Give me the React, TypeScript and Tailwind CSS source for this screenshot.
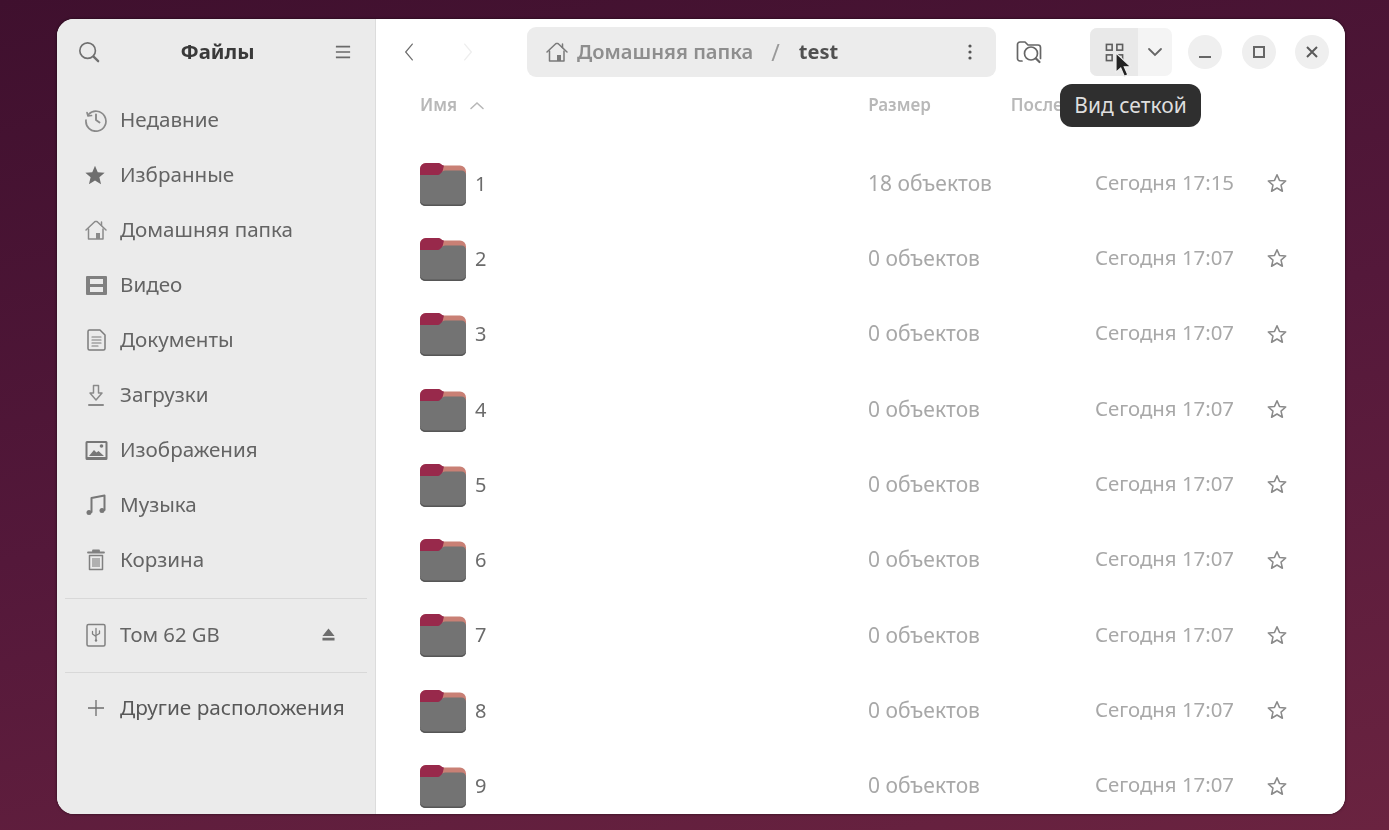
import React from "react";

const S = { fill: "none", stroke: "currentColor", strokeWidth: 1.5, strokeLinecap: "round", strokeLinejoin: "round" } as const;

const HomeIcon = ({ className }: { className?: string }) => (
  <svg viewBox="0 0 24 24" className={className} {...S}>
    <path d="M2 12 11 3.500 13 3.500 22 12" />
    <path d="M4.500 11v10h14.500V11" />
    <path d="M17.500 4v3.500" />
    <rect x="12" y="15" width="4" height="6" fill="currentColor" stroke="none" />
  </svg>
);

const icons: Record<string, React.ReactNode> = {
  recent: (
    <svg viewBox="0 0 24 24" className="h-[24px] w-[24px] text-[#8a8a8a]" {...S} strokeWidth={1.7}>
      <path d="M4.500 6.500A10 10 0 1 1 2 12" />
      <path d="M3 4.500 4 8l3.500-.5" />
      <path d="M12 6.500V12l3.500 2.500" strokeWidth={1.900} />
    </svg>
  ),
  star: (
    <svg viewBox="0 0 24 24" className="h-[22px] w-[22px]" fill="currentColor">
      <path d="M12 2l3 7 7.500.6-5.700 4.900 1.800 7.500L12 18l-6.600 4 1.800-7.500L1.500 9.600 9 9z" />
    </svg>
  ),
  home: <HomeIcon className="h-[24px] w-[24px] text-[#8a8a8a]" />,
  video: (
    <svg viewBox="0 0 24 24" className="h-[24px] w-[24px] text-[#808080]">
      <path fill="currentColor" fillRule="evenodd" d="M3 3h19a1 1 0 0 1 1 1v17a1 1 0 0 1-1 1H3a1 1 0 0 1-1-1V4a1 1 0 0 1 1-1zm3 3v5h13V6zm0 8v5h13v-5z" />
    </svg>
  ),
  docs: (
    <svg viewBox="0 0 24 24" className="h-[24px] w-[24px] text-[#7c7c7c]" {...S}>
      <path d="M4 3.500A1.500 1.500 0 0 1 5.500 2H16l5 5v13.500a1.500 1.500 0 0 1-1.500 1.500h-14A1.500 1.500 0 0 1 4 20.500z" />
      <path d="M8 9h9M8 12h9M8 15h9M8 18h6" strokeWidth={1.2} />
    </svg>
  ),
  down: (
    <svg viewBox="0 0 24 24" className="h-[24px] w-[24px] text-[#8a8a8a]" {...S}>
      <path d="M9.500 2.500h5V10H18l-6 7-6-7h3.500z" />
      <path d="M5 22h14" strokeWidth={2} />
    </svg>
  ),
  image: (
    <svg viewBox="0 0 24 24" className="h-[24px] w-[24px] text-[#777]">
      <path fill="currentColor" fillRule="evenodd" d="M3 3h19a1.500 1.500 0 0 1 1.500 1.500v16A1.500 1.500 0 0 1 22 22H3a1.500 1.500 0 0 1-1.500-1.500v-16A1.500 1.500 0 0 1 3 3zm.5 2v14h18V5z" />
      <path fill="currentColor" d="M5 18l5-6 2.500 2.500 2-1.500L20 18z" />
      <circle cx="17.500" cy="8" r="1.800" fill="currentColor" />
    </svg>
  ),
  music: (
    <svg viewBox="0 0 24 24" className="h-[24px] w-[24px] text-[#777]" {...S} strokeWidth={2}>
      <path d="M7.500 19V5l13-2.500V17" />
      <circle cx="5" cy="19.500" r="2.500" fill="currentColor" stroke="none" />
      <circle cx="18" cy="17.500" r="2.500" fill="currentColor" stroke="none" />
    </svg>
  ),
  trash: (
    <svg viewBox="0 0 24 24" className="h-[24px] w-[24px] text-[#808080]" {...S}>
      <path d="M5.500 7.500h13v14h-13z" />
      <path d="M4 4.500h16M9 4.500V2.500h6v2" strokeWidth={1.800} />
      <rect x="8" y="10" width="8" height="9" fill="currentColor" stroke="none" opacity="0.55" />
    </svg>
  ),
  usb: (
    <svg viewBox="0 0 24 24" className="h-[24px] w-[24px] text-[#808080]" {...S}>
      <rect x="3" y="1.500" width="18" height="21.500" rx="1.500" />
      <path d="M12 5.500v11.500M8.500 8.500v2.500L12 13.500M15.500 8v2.500L12 12.500" strokeWidth={1.300} />
      <circle cx="12" cy="17.500" r="1.200" fill="currentColor" stroke="none" />
    </svg>
  ),
};

const sidebarItems = [
  ["recent", "Недавние"],
  ["star", "Избранные"],
  ["home", "Домашняя папка"],
  ["video", "Видео"],
  ["docs", "Документы"],
  ["down", "Загрузки"],
  ["image", "Изображения"],
  ["music", "Музыка"],
  ["trash", "Корзина"],
];

const rows = ["1", "2", "3", "4", "5", "6", "7", "8", "9"];

const Folder = () => (
  <svg viewBox="0 0 48 46" className="h-[46px] w-[48px] shrink-0">
    <path d="M1 8a6 6 0 0 1 6-6h12c3 0 3.500 2.500 6 2.500h16a6 6 0 0 1 6 6V20H1z" fill="#c98075" />
    <path d="M1 8a6 6 0 0 1 6-6h12c3 0 3.500 2.500 6 2.500l-1 4-2 8H1z" fill="#98294b" />
    <path d="M1 14h18c3 0 3.500-4.500 7-4.500h16.500a4.500 4.500 0 0 1 4.500 4.500V40a5 5 0 0 1-5 5H6a5 5 0 0 1-5-5z" fill="#737373" />
    <path d="M1 38.500a5 5 0 0 0 5 5h36a5 5 0 0 0 5-5V40a5 5 0 0 1-5 5H6a5 5 0 0 1-5-5z" fill="#565656" />
  </svg>
);

const Row = ({ name, size, time }: { name: string; size: string; time: string }) => (
  <div className="flex h-[75.3px] shrink-0 items-center pl-[43px]">
    <div className="flex w-[449px] shrink-0 items-center">
      <Folder />
      <span className="ml-[8px] text-[20px] text-[#6b6b6b]">{name}</span>
    </div>
    <span className="w-[227px] shrink-0 text-[21px] text-[#a8a8a8]">{size}</span>
    <span className="-mt-[3px] w-[171px] shrink-0 text-[20.400px] text-[#a8a8a8]">{time}</span>
    <svg viewBox="0 0 24 24" className="-mt-[1px] h-[22px] w-[22px] shrink-0 text-[#8a8a8a]" fill="none" stroke="currentColor" strokeWidth="1.700" strokeLinejoin="round">
      <path d="M12 3l2.700 6.200 6.800.6-5.100 4.500 1.500 6.700-5.900-3.500-5.900 3.500 1.500-6.700L2.500 9.800l6.800-.6z" />
    </svg>
  </div>
);

export default function App() {
  return (
    <div
      className="relative h-[830px] w-[1389px] overflow-hidden bg-[linear-gradient(168deg,#3f102e,#54183a_50%,#6a2340)] pb-[16px] pl-[57px] pr-[44px] pt-[19px]"
      style={{ fontFamily: '"Noto Sans", "Open Sans", sans-serif' }}
    >
      <div className="relative flex h-[795px] w-[1288px] overflow-hidden rounded-[17px] bg-white blur-[0.7px] shadow-[0_0_3px_rgba(0,0,0,0.6)]">
        {/* Sidebar */}
        <aside className="flex w-[319px] shrink-0 flex-col border-r border-[#dcdcdc] bg-[#ebebeb]">
          <header className="flex h-[66px] shrink-0 items-center justify-between pl-[21px] pr-[24px]">
            <svg viewBox="0 0 24 24" className="h-[22px] w-[22px] text-[#707070]" {...S} strokeWidth={1.800}>
              <circle cx="10.500" cy="10.500" r="8.500" />
              <path d="M17 17l5 5" strokeWidth={2.500} />
            </svg>
            <span className="-mt-[1px] text-[20.300px] font-bold text-[#3a3a3a]">Файлы</span>
            <svg viewBox="0 0 18 16" className="h-[16px] w-[16px] text-[#6a6a6a]" stroke="currentColor" strokeWidth="1.900">
              <path d="M1 2h16M1 8h16M1 14h16" />
            </svg>
          </header>
          <nav className="flex flex-col pt-[7px]">
            {sidebarItems.map(([icon, label]) => (
              <div key={label} className="flex h-[55px] shrink-0 items-center pl-[27px] text-[#6e6e6e]">
                <span className="flex w-[36px] shrink-0 items-center">{icons[icon]}</span>
                <span className="text-[20.600px] text-[#646464]">{label}</span>
              </div>
            ))}
          </nav>
          <div className="mx-[8px] mt-[11px] h-px shrink-0 bg-[#d8d8d8]" />
          <div className="mt-[8px] flex h-[55px] shrink-0 items-center pl-[27px] pr-[40px] text-[#6e6e6e]">
            <span className="flex w-[36px] shrink-0 items-center">{icons.usb}</span>
            <span className="flex-1 text-[20.300px] text-[#646464]">Том 62 GB</span>
            <svg viewBox="0 0 14 13" className="h-[13px] w-[13px]" fill="currentColor">
              <path d="M7 0l6.500 8H.5zM.5 10h13v3H.5z" />
            </svg>
          </div>
          <div className="mx-[8px] mt-[10px] h-px shrink-0 bg-[#d8d8d8]" />
          <div className="mt-[7px] flex h-[55px] shrink-0 items-center pl-[30px] text-[#6e6e6e]">
            <svg viewBox="0 0 18 18" className="h-[18px] w-[18px] shrink-0" stroke="currentColor" strokeWidth="1.300">
              <path d="M9 1v16M1 9h16" />
            </svg>
            <span className="ml-[15px] whitespace-nowrap text-[20.800px] text-[#585858]">Другие расположения</span>
          </div>
        </aside>

        {/* Main */}
        <main className="flex min-w-0 flex-1 flex-col overflow-hidden bg-white">
          <div className="flex h-[66px] shrink-0 items-center">
            <svg viewBox="0 0 12 22" className="ml-[28px] h-[22px] w-[10px] text-[#6e6e6e]" fill="none" stroke="currentColor" strokeWidth="1.500" strokeLinecap="round">
              <path d="M10 1.500 2 11l8 9.500" />
            </svg>
            <svg viewBox="0 0 12 22" className="ml-[49px] h-[22px] w-[10px] text-[#eeeeee]" fill="none" stroke="currentColor" strokeWidth="1.600" strokeLinecap="round">
              <path d="M2 1.500 10 11l-8 9.500" />
            </svg>
            <div className="ml-[54px] flex h-[50px] w-[469px] shrink-0 items-center rounded-[9px] bg-[#ececec] pl-[18px] pr-[24px]">
              <HomeIcon className="h-[24px] w-[24px] text-[#7a7a7a]" />
              <span className="ml-[8px] text-[20.100px] font-semibold text-[#8e8e8e]">Домашняя папка</span>
              <span className="ml-[18px] text-[23px] text-[#9a9a9a]">/</span>
              <span className="ml-[19px] text-[20px] font-bold text-[#505050]">test</span>
              <svg viewBox="0 0 4 16" className="ml-auto h-[16px] w-[4px] text-[#555]" fill="currentColor">
                <circle cx="2" cy="2" r="1.600" />
                <circle cx="2" cy="8" r="1.600" />
                <circle cx="2" cy="14" r="1.600" />
              </svg>
            </div>
            <svg viewBox="0 0 26 24" className="ml-[20px] h-[24px] w-[26px] text-[#666]" fill="none" stroke="currentColor" strokeWidth="1.700" strokeLinecap="round" strokeLinejoin="round">
              <path d="M6 21H4a2.500 2.500 0 0 1-2.500-2.500V4.500A2.500 2.500 0 0 1 4 2h5l3 3h10a2.500 2.500 0 0 1 2.500 2.500v11" />
              <circle cx="15" cy="13.500" r="6.500" />
              <path d="M20 18.500l3.500 3.500" strokeWidth={2.200} />
            </svg>
            <div className="ml-[48px] flex h-[48px] w-[82px] shrink-0 overflow-hidden rounded-[7px] bg-[#f4f4f4]">
              <div className="flex w-[48px] items-center justify-center bg-[#e9e9e9]">
                <svg viewBox="0 0 20 20" className="h-[19px] w-[19px] text-[#5e5e5e]" fill="none" stroke="currentColor" strokeWidth="1.700">
                  <rect x="1.500" y="1.500" width="6" height="6" />
                  <rect x="12.500" y="1.500" width="6" height="6" />
                  <rect x="1.500" y="12.500" width="6" height="6" />
                  <rect x="12.500" y="12.500" width="6" height="6" />
                </svg>
              </div>
              <div className="flex flex-1 items-center justify-center">
                <svg viewBox="0 0 16 10" className="h-[10px] w-[16px] text-[#666]" fill="none" stroke="currentColor" strokeWidth="1.800" strokeLinecap="round">
                  <path d="M2 2l6 6 6-6" />
                </svg>
              </div>
            </div>
            <div className="ml-[16px] flex items-center gap-[19.500px]">
              <div className="flex h-[34px] w-[34px] items-center justify-center rounded-full bg-[#efefef]">
                <svg viewBox="0 0 12 2" className="mt-[9px] h-[2px] w-[12px] text-[#666]" stroke="currentColor" strokeWidth="2">
                  <path d="M0 1h12" />
                </svg>
              </div>
              <div className="flex h-[34px] w-[34px] items-center justify-center rounded-full bg-[#efefef]">
                <svg viewBox="0 0 12 12" className="h-[12px] w-[12px] text-[#666]" fill="none" stroke="currentColor" strokeWidth="2">
                  <rect x="1" y="1" width="10" height="10" />
                </svg>
              </div>
              <div className="flex h-[34px] w-[34px] items-center justify-center rounded-full bg-[#efefef]">
                <svg viewBox="0 0 12 12" className="h-[12px] w-[12px] text-[#5a5a5a]" fill="none" stroke="currentColor" strokeWidth="2">
                  <path d="M1 1l10 10M11 1 1 11" />
                </svg>
              </div>
            </div>
          </div>

          <div className="flex h-[40px] shrink-0 items-center pl-[44px] text-[17px] font-semibold text-[#b8b8b8]">
            <span>Имя</span>
            <svg viewBox="0 0 16 9" className="ml-[12px] h-[9px] w-[16px]" fill="none" stroke="currentColor" strokeWidth="1.600" strokeLinecap="round">
              <path d="M2 7.500 8 2l6 5.500" />
            </svg>
            <span className="ml-[383px]">Размер</span>
            <span className="ml-[80px]">После</span>
          </div>

          <div className="flex flex-col pt-[21px]">
            <Row name="1" size="18 объектов" time="Сегодня 17:15" />
            {rows.slice(1).map((r) => (
              <Row key={r} name={r} size="0 объектов" time="Сегодня 17:07" />
            ))}
          </div>
        </main>

        {/* Tooltip */}
        <div className="absolute left-[1003px] top-[65px] flex h-[43px] w-[141px] items-center justify-center rounded-[12px] bg-[#2f2f2f] text-[21px] text-[#dedede]">
          Вид сеткой
        </div>
        {/* Cursor */}
        <svg viewBox="0 0 14 22" className="absolute left-[1057px] top-[33px] h-[26px] w-[17px]">
          <path d="M1.500 1v16l4-3.500 3 7 3-1.300-3-6.700h5.500z" fill="#222" stroke="#eee" strokeWidth="1" />
        </svg>
      </div>
    </div>
  );
}
